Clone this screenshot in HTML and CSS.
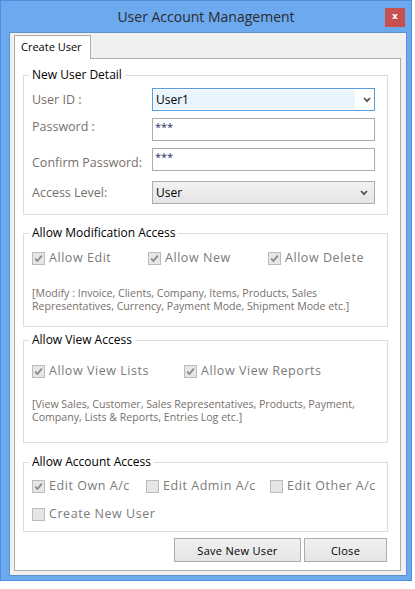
FILE: index.html
```html
<!DOCTYPE html>
<html>
<head>
<meta charset="utf-8">
<title>User Account Management</title>
<link rel="stylesheet" href="styles.css">
</head>
<body>
<div class="window">
  <div class="titlebar">
    <span class="spacer"></span>
    <span class="title">User Account Management</span>
    <span class="close-btn">x</span>
  </div>
  <div class="client">
    <div class="tabs">
      <div class="tab">Create User</div>
    </div>
    <div class="panel">
      <fieldset class="group g-detail">
        <legend>New User Detail</legend>
        <div class="field">
          <span class="label">User ID :</span>
          <div class="combo focus">
            <span class="combo-sel">User1</span>
            <svg class="chev" width="8" height="6" viewBox="0 0 8 6"><path d="M1 1 L4 4.2 L7 1" fill="none" stroke="#555" stroke-width="1.8"/></svg>
          </div>
        </div>
        <div class="field">
          <span class="label lbl-up">Password :</span>
          <div class="textbox">***</div>
        </div>
        <div class="field">
          <span class="label lbl-down">Confirm Password:</span>
          <div class="textbox">***</div>
        </div>
        <div class="field field-wide">
          <span class="label">Access Level:</span>
          <div class="combo select">
            <span class="select-text">User</span>
            <svg class="chev" width="8" height="6" viewBox="0 0 8 6"><path d="M1 1 L4 4.2 L7 1" fill="none" stroke="#555" stroke-width="1.8"/></svg>
          </div>
        </div>
      </fieldset>

      <fieldset class="group g-mod">
        <legend>Allow Modification Access</legend>
        <div class="checks cols-mod">
          <label class="check"><span class="cb"><svg width="11" height="11" viewBox="0 0 11 11"><path d="M2.2 5.6 L4.4 8 L8.8 2.6" fill="none" stroke="#8a8a8a" stroke-width="1.7"/></svg></span>Allow Edit</label>
          <label class="check"><span class="cb"><svg width="11" height="11" viewBox="0 0 11 11"><path d="M2.2 5.6 L4.4 8 L8.8 2.6" fill="none" stroke="#8a8a8a" stroke-width="1.7"/></svg></span>Allow New</label>
          <label class="check"><span class="cb"><svg width="11" height="11" viewBox="0 0 11 11"><path d="M2.2 5.6 L4.4 8 L8.8 2.6" fill="none" stroke="#8a8a8a" stroke-width="1.7"/></svg></span>Allow Delete</label>
        </div>
        <p class="desc desc-mod">[Modify : Invoice, Clients, Company, Items, Products, Sales Representatives, Currency, Payment Mode, Shipment Mode etc.]</p>
      </fieldset>

      <fieldset class="group g-view">
        <legend>Allow View Access</legend>
        <div class="checks cols-view">
          <label class="check"><span class="cb"><svg width="11" height="11" viewBox="0 0 11 11"><path d="M2.2 5.6 L4.4 8 L8.8 2.6" fill="none" stroke="#8a8a8a" stroke-width="1.7"/></svg></span>Allow View Lists</label>
          <label class="check"><span class="cb"><svg width="11" height="11" viewBox="0 0 11 11"><path d="M2.2 5.6 L4.4 8 L8.8 2.6" fill="none" stroke="#8a8a8a" stroke-width="1.7"/></svg></span>Allow View Reports</label>
        </div>
        <p class="desc desc-view">[View Sales, Customer, Sales Representatives, Products, Payment, Company, Lists &amp; Reports, Entries Log etc.]</p>
      </fieldset>

      <fieldset class="group g-acc">
        <legend>Allow Account Access</legend>
        <div class="checks cols-acc">
          <label class="check"><span class="cb"><svg width="11" height="11" viewBox="0 0 11 11"><path d="M2.2 5.6 L4.4 8 L8.8 2.6" fill="none" stroke="#8a8a8a" stroke-width="1.7"/></svg></span>Edit Own A/c</label>
          <label class="check"><span class="cb"></span>Edit Admin A/c</label>
          <label class="check"><span class="cb"></span>Edit Other A/c</label>
        </div>
        <div class="checks row2">
          <label class="check"><span class="cb"></span>Create New User</label>
        </div>
      </fieldset>

      <div class="buttons">
        <button class="btn btn-save">Save New User</button>
        <button class="btn btn-close">Close</button>
      </div>
    </div>
  </div>
</div>
</body>
</html>
```

FILE: styles.css
```css
* { box-sizing: border-box; }

html, body {
  margin: 0;
  padding: 0;
  background: #ffffff;
}

body {
  font-family: "Open Sans", "Noto Sans", sans-serif;
  font-size: 12px;
  color: #000;
}

.window {
  width: 412px;
  height: 581px;
  border: 1px solid #4f8edb;
  background: #6ca9ef;
  display: flex;
  flex-direction: column;
}

.titlebar {
  height: 31px;
  flex: none;
  display: grid;
  grid-template-columns: 1fr auto 1fr;
}

.title {
  font-size: 14px;
  line-height: 31px;
  color: #2b2b2b;
}

.close-btn {
  justify-self: end;
  align-self: start;
  margin-top: 7px;
  margin-right: 6px;
  width: 20px;
  height: 19px;
  background: #c75050;
  color: #fff;
  font-family: "DejaVu Sans", sans-serif;
  font-weight: bold;
  font-size: 9px;
  line-height: 17px;
  text-align: center;
}

.client {
  flex: 1;
  margin: 0 4px 4px 8px;
  background: #f0f0f0;
  border: 1px solid #5b90d2;
  padding: 2px 5px 4px 4px;
  display: flex;
  flex-direction: column;
}

.tabs {
  display: flex;
  flex: none;
}

.tab {
  position: relative;
  z-index: 1;
  width: 77px;
  height: 24px;
  margin-bottom: -1px;
  background: #fff;
  border: 1px solid #adadad;
  border-bottom: none;
  font-size: 11px;
  line-height: 22px;
  padding-left: 6px;
  color: #000;
}

.panel {
  flex: 1;
  background: #fff;
  border: 1px solid #adadad;
  padding: 8px 12px 0 8px;
  display: flex;
  flex-direction: column;
}

.group {
  margin: 0;
  min-width: 0;
  border: 1px solid #dcdcdc;
}

.group legend {
  padding: 0 3px;
  margin-left: -3px;
  font-size: 12px;
  line-height: 16px;
  color: #000;
}

.g-detail { padding: 5px 11px 10px 8px; }
.g-mod { margin-top: 10px; padding: 9px 8px 13px 8px; }
.g-view { margin-top: 5px; padding: 15px 8px 18px 8px; }
.g-acc { margin-top: 11px; padding: 8px 8px 9px 8px; }

.field {
  display: grid;
  grid-template-columns: 120px 223px;
  align-items: center;
  height: 23px;
}

.field + .field { margin-top: 7px; }
.field.field-wide { margin-top: 10px; }

.label {
  font-size: 12.5px;
  line-height: 16px;
  color: #75706c;
}

.lbl-up { margin-bottom: 5px; }
.lbl-down { margin-top: 7px; }

.combo {
  height: 23px;
  display: flex;
  align-items: center;
  border: 1px solid #acacac;
}

.combo.focus {
  border-color: #569de5;
  background: #fff;
  padding: 1px;
  align-items: stretch;
}

.combo-sel {
  width: 201px;
  background: #eaf4fd;
  font-size: 12px;
  line-height: 19px;
  padding-left: 2px;
  color: #000;
}

.combo.focus .chev {
  align-self: center;
  margin-left: 8px;
}

.combo.select {
  background: linear-gradient(#f2f2f2, #e5e5e5);
  padding-left: 3px;
}

.select-text {
  flex: 1;
  font-size: 12px;
  line-height: 19px;
}

.combo.select .chev {
  margin-right: 6px;
}

.textbox {
  height: 23px;
  border: 1px solid #acacac;
  background: #fff;
  font-size: 11px;
  line-height: 14px;
  padding: 1px 0 0 2px;
  color: #2a2a5e;
}

.checks {
  display: grid;
  align-items: center;
}

.cols-mod { grid-template-columns: 116px 120px auto; }
.cols-view { grid-template-columns: 152px auto; }
.cols-acc { grid-template-columns: 114px 124px auto; }
.row2 { margin-top: 12px; }

.check {
  display: flex;
  align-items: center;
  font-size: 12.5px;
  letter-spacing: 0.55px;
  line-height: 16px;
  color: #7b7b7b;
  white-space: nowrap;
}

.cb {
  width: 13px;
  height: 13px;
  flex: none;
  margin-right: 4px;
  border: 1px solid #bcbcbc;
  background: #e6e6e6;
  display: flex;
  align-items: center;
  justify-content: center;
}

.desc {
  margin: 0;
  font-size: 10.6px;
  line-height: 13px;
  color: #77706b;
}

.desc-mod { margin-top: 21px; }
.desc-view { margin-top: 19px; }

.buttons {
  display: flex;
  justify-content: flex-end;
  gap: 3px;
  margin-top: 6px;
  padding-right: 1px;
}

.btn {
  height: 24px;
  border: 1px solid #acacac;
  background: linear-gradient(#f0f0f0, #e5e5e5);
  font-family: "Open Sans", sans-serif;
  font-size: 11px;
  letter-spacing: 0.3px;
  color: #000;
  padding: 0;
}

.btn-save { width: 127px; }
.btn-close { width: 83px; }
```
